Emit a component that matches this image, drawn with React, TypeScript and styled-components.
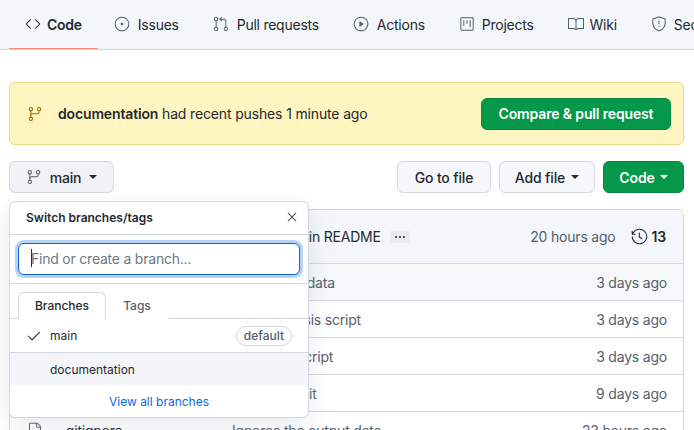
import React from "react";
import styled, { createGlobalStyle } from "styled-components";
import {
  GoBook,
  GoCheck,
  GoCode,
  GoFile,
  GoGitBranch,
  GoGitPullRequest,
  GoHistory,
  GoIssueOpened,
  GoKebabHorizontal,
  GoPlay,
  GoProject,
  GoShield,
  GoX,
} from "react-icons/go";

const GlobalStyle = createGlobalStyle`
  html, body {
    margin: 0;
    height: 430px;
    overflow: hidden;
    background: #ffffff;
  }
  body {
    font-family: Inter, "Liberation Sans", sans-serif;
    font-size: 14px;
    letter-spacing: -0.15px;
    color: #24292f;
  }
  * {
    box-sizing: border-box;
  }
`;

// --- top tabs ---

const TabNav = styled.nav`
  display: flex;
  height: 50px;
  padding-left: 9px;
  background: #f3f6fa;
  border-bottom: 1px solid #d0d7de;
  overflow: hidden;
  white-space: nowrap;
`;

const NavTab = styled.div<{ $active?: boolean; $gap: number }>`
  display: flex;
  flex: none;
  align-items: center;
  gap: ${(p) => p.$gap}px;
  height: 50px;
  margin-right: ${(p) => (p.$active ? 0 : 2)}px;
  padding: 0 16px;
  border-bottom: 2px solid ${(p) => (p.$active ? "#fd8c73" : "transparent")};
  font-weight: ${(p) => (p.$active ? 600 : 400)};
  letter-spacing: -0.25px;
  color: #24292f;

  svg {
    flex: none;
    color: ${(p) => (p.$active ? "#24292f" : "#57606a")};
  }
`;

// --- main area ---

const Main = styled.main`
  padding: 32px 10px 0 9px;
`;

const Banner = styled.div`
  display: flex;
  align-items: center;
  height: 63px;
  margin-bottom: 16px;
  padding: 0 12px 0 17px;
  background: #fff5c0;
  border: 1px solid #eed888;
  border-radius: 6px;
`;

const BannerText = styled.span`
  flex: 1;
  margin-left: 15px;

  b {
    font-weight: 600;
  }
`;

const PrimaryButton = styled.button<{ $width: number }>`
  display: inline-flex;
  align-items: center;
  justify-content: center;
  gap: 5px;
  width: ${(p) => p.$width}px;
  height: 32px;
  padding: 0;
  background: #05984a;
  border: 1px solid #078a44;
  border-radius: 6px;
  color: #ffffff;
  font: 600 14px Inter, "Liberation Sans", sans-serif;
  letter-spacing: -0.15px;
`;

const ActionRow = styled.div`
  display: flex;
  align-items: center;
  gap: 8px;
  margin-bottom: 16px;
`;

const BranchWrap = styled.div`
  position: relative;
  margin-right: auto;
`;

const GrayButton = styled.button<{ $width?: number }>`
  display: inline-flex;
  align-items: center;
  justify-content: center;
  gap: 6px;
  width: ${(p) => (p.$width ? `${p.$width}px` : "auto")};
  height: 32px;
  padding: 0;
  background: #f5f7fa;
  border: 1px solid #d4d9df;
  border-radius: 6px;
  color: #24292f;
  font: 500 14px Inter, "Liberation Sans", sans-serif;
  letter-spacing: -0.15px;
`;

const Caret = styled.span<{ $color?: string }>`
  width: 0;
  height: 0;
  border-top: 4px solid ${(p) => p.$color || "#24292f"};
  border-left: 4px solid transparent;
  border-right: 4px solid transparent;
`;

const BranchButton = styled(GrayButton)`
  gap: 8px;
  width: 105px;
  background: #f0f2f5;

  svg {
    color: #57606a;
  }
`;

// --- file table behind the menu ---

const FileBox = styled.div`
  border: 1px solid #d0d7de;
  border-radius: 6px;
  letter-spacing: -0.2px;
`;

const CommitHeader = styled.div`
  display: flex;
  align-items: center;
  height: 54px;
  padding: 0 17px 0 223px;
  background: #f3f6fa;
  border-bottom: 1px solid #d0d7de;
  border-radius: 6px 6px 0 0;
`;

const EllipsisTag = styled.span`
  display: inline-flex;
  align-items: center;
  justify-content: center;
  width: 20px;
  height: 12px;
  margin-left: 9px;
  margin-right: auto;
  background: #e9edf1;
  border-radius: 1px;
  color: #24292f;
`;

const HeaderTime = styled.span`
  color: #57606a;
`;

const CommitCount = styled.span`
  display: flex;
  align-items: center;
  gap: 4px;
  margin-left: 15px;
  font-weight: 600;
`;

const FileRow = styled.div<{ $hover?: boolean }>`
  display: flex;
  align-items: center;
  height: 37px;
  padding-right: 16px;
  background: ${(p) => (p.$hover ? "#f6f8fa" : "#ffffff")};
  border-bottom: 1px solid #d0d7de;
  color: #57606a;
`;

const FileIcon = styled.span`
  display: flex;
  width: 52px;
  padding-left: 17px;
  color: #57606a;
`;

const FileName = styled.span`
  width: 170px;
  color: #24292f;
`;

const FileMessage = styled.span`
  flex: 1;
`;

// --- branch menu ---

const Menu = styled.div`
  position: absolute;
  top: 40px;
  left: 0;
  z-index: 2;
  width: 300px;
  height: 217px;
  background: #ffffff;
  border: 1px solid #d0d7de;
  border-radius: 6px;
  box-shadow: 0 8px 24px rgba(140, 149, 159, 0.2);
  overflow: hidden;
`;

const MenuHeader = styled.div`
  display: flex;
  align-items: center;
  justify-content: space-between;
  height: 33px;
  padding: 0 8px 2px 16px;
  border-bottom: 1px solid #d0d7de;
  font-size: 12px;
  font-weight: 600;
  letter-spacing: 0;

  svg {
    color: #444c56;
  }
`;

const MenuFilter = styled.div`
  height: 49px;
  padding: 8px;
  border-bottom: 1px solid #d0d7de;
`;

const FilterInput = styled.div`
  display: flex;
  align-items: center;
  height: 32px;
  padding: 0 0 2px 12px;
  background: #ffffff;
  border: 1px solid #0969da;
  border-radius: 6px;
  box-shadow: 0 0 0 3px rgba(9, 105, 218, 0.3);
  letter-spacing: -0.22px;
  color: #6e7781;
`;

const TextCursor = styled.span`
  width: 1px;
  height: 18px;
  margin-right: -1px;
  background: #24292f;
`;

const MenuTabs = styled.div`
  display: flex;
  height: 35px;
  padding: 8px 8px 0;
  border-bottom: 1px solid #d0d7de;
  font-size: 12px;
  letter-spacing: 0;
`;

const MenuTab = styled.div<{ $active?: boolean }>`
  display: flex;
  align-items: center;
  justify-content: center;
  width: ${(p) => (p.$active ? "88px" : "62px")};
  height: 27px;
  padding-bottom: 2px;
  background: #ffffff;
  border: 1px solid ${(p) => (p.$active ? "#d0d7de" : "transparent")};
  border-bottom: none;
  border-radius: 6px 6px 0 0;
  font-weight: 500;
  color: ${(p) => (p.$active ? "#24292f" : "#57606a")};
`;

const MenuItem = styled.div<{ $hover?: boolean }>`
  display: flex;
  align-items: center;
  height: ${(p) => (p.$hover ? "32px" : "34px")};
  padding: 0 16px;
  background: ${(p) => (p.$hover ? "#f3f5f8" : "#ffffff")};
  border-bottom: ${(p) => (p.$hover ? "none" : "1px solid #d0d7de")};
  font-size: 12px;
  font-weight: 400;
  letter-spacing: 0;
  color: #24292f;
`;

const CheckSlot = styled.span`
  display: flex;
  width: 24px;
  color: #24292f;
`;

const DefaultBadge = styled.span`
  display: flex;
  align-items: center;
  height: 20px;
  margin-left: auto;
  padding: 0 7px;
  border: 1px solid #d0d7de;
  border-radius: 10px;
  font-weight: 500;
  color: #57606a;
`;

const MenuFooter = styled.div`
  display: flex;
  align-items: center;
  justify-content: center;
  height: 32px;
  font-size: 12px;
  font-weight: 400;
  letter-spacing: 0;
  color: #0969da;
`;

// --- data ---

const tabs = [
  { label: "Code", Icon: GoCode, gap: 6, active: true },
  { label: "Issues", Icon: GoIssueOpened, gap: 8 },
  { label: "Pull requests", Icon: GoGitPullRequest, gap: 8 },
  { label: "Actions", Icon: GoPlay, gap: 8 },
  { label: "Projects", Icon: GoProject, gap: 7 },
  { label: "Wiki", Icon: GoBook, gap: 6 },
  { label: "Security", Icon: GoShield, gap: 7 },
];

const files = [
  { name: "data", message: "Update the data", age: "3 days ago", hover: true },
  { name: "analysis.py", message: "Adds analysis script", age: "3 days ago" },
  { name: "plot.py", message: "Adds plot script", age: "3 days ago" },
  { name: "README.md", message: "Initial commit", age: "9 days ago" },
  { name: ".gitignore", message: "Ignores the output data", age: "23 hours ago" },
];

const App: React.FC = () => {
  return (
    <>
      <GlobalStyle />
      <TabNav>
        {tabs.map(({ label, Icon, gap, active }) => (
          <NavTab key={label} $active={active} $gap={gap}>
            <Icon size={16} />
            {label}
          </NavTab>
        ))}
      </TabNav>

      <Main>
        <Banner>
          <GoGitBranch size={16} color="#9a6700" />
          <BannerText>
            <b>documentation</b> had recent pushes 1 minute ago
          </BannerText>
          <PrimaryButton $width={190}>Compare &amp; pull request</PrimaryButton>
        </Banner>

        <ActionRow>
          <BranchWrap>
            <BranchButton>
              <GoGitBranch size={16} />
              main
              <Caret />
            </BranchButton>

            <Menu>
              <MenuHeader>
                Switch branches/tags
                <GoX size={16} />
              </MenuHeader>
              <MenuFilter>
                <FilterInput>
                  <TextCursor />
                  Find or create a branch...
                </FilterInput>
              </MenuFilter>
              <MenuTabs>
                <MenuTab $active>Branches</MenuTab>
                <MenuTab>Tags</MenuTab>
              </MenuTabs>
              <MenuItem>
                <CheckSlot>
                  <GoCheck size={16} />
                </CheckSlot>
                main
                <DefaultBadge>default</DefaultBadge>
              </MenuItem>
              <MenuItem $hover>
                <CheckSlot />
                documentation
              </MenuItem>
              <MenuFooter>View all branches</MenuFooter>
            </Menu>
          </BranchWrap>
          <GrayButton $width={94}>Go to file</GrayButton>
          <GrayButton $width={96}>
            Add file
            <Caret />
          </GrayButton>
          <PrimaryButton $width={81}>
            Code
            <Caret $color="#ffffff" />
          </PrimaryButton>
        </ActionRow>

        <FileBox>
          <CommitHeader>
            <span>Add details in README</span>
            <EllipsisTag>
              <GoKebabHorizontal size={12} />
            </EllipsisTag>
            <HeaderTime>20 hours ago</HeaderTime>
            <CommitCount>
              <GoHistory size={17} />
              13
            </CommitCount>
          </CommitHeader>
          {files.map((file) => (
            <FileRow key={file.name} $hover={file.hover}>
              <FileIcon>
                <GoFile size={16} />
              </FileIcon>
              <FileName>{file.name}</FileName>
              <FileMessage>{file.message}</FileMessage>
              {file.age}
            </FileRow>
          ))}
        </FileBox>
      </Main>
    </>
  );
};

export default App;
